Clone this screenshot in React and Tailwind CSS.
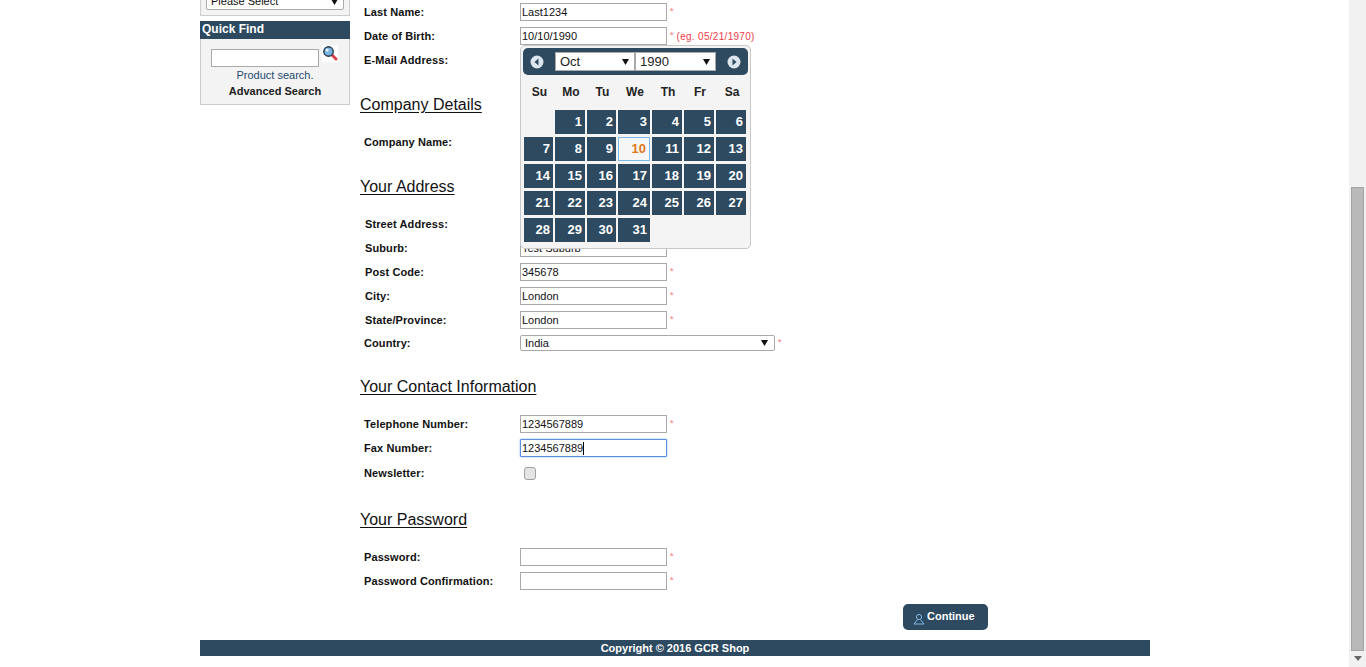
import React from "react";

const monthDays = [
  null, 1, 2, 3, 4, 5, 6,
  7, 8, 9, 10, 11, 12, 13,
  14, 15, 16, 17, 18, 19, 20,
  21, 22, 23, 24, 25, 26, 27,
  28, 29, 30, 31,
];

const weekDays = ["Su", "Mo", "Tu", "We", "Th", "Fr", "Sa"];

// Small black triangle used by the select boxes
const Caret = ({ className = "" }) => (
  <svg width="7" height="6" viewBox="0 0 7 6" className={className}>
    <path d="M0 0H7L3.5 6Z" fill="#111" />
  </svg>
);

const Required = ({ hint }) => (
  <span className="flex items-center ml-[3px] -mt-[2px] leading-none">
    <span className="text-[9px] text-[#ff7070]">*</span>
    {hint && <span className="ml-[3px] mt-[4px] text-[10px] text-[#f03a4a] tracking-[0.3px]">{hint}</span>}
  </span>
);

const Field = ({ label, value = "", hint, required = true, inset = false }) => (
  <div className="flex items-center h-6">
    <label className={`font-bold tracking-[0.1px] w-[170px] ${inset ? "pl-[15px]" : "pl-[14px]"}`}>{label}</label>
    <input
      readOnly
      defaultValue={value}
      className="w-[147px] h-[18px] px-[1px] border border-[#a9a9a9] bg-white text-[11px] text-[#111] outline-none"
    />
    {required && <Required hint={hint} />}
  </div>
);

const Heading = ({ children, className = "" }) => (
  <h2 className={`h-5 mb-[15px] pl-[10px] text-base leading-5 font-normal underline underline-offset-[2px] text-[#111] ${className}`}>
    {children}
  </h2>
);

const RoundArrow = ({ flip = false }) => (
  <svg width="14" height="14" viewBox="0 0 14 14" className={flip ? "rotate-180" : ""}>
    <circle cx="7" cy="7" r="6.5" fill="#dde5ee" />
    <path d="M4.5 7L8.5 3.5V10.5Z" fill="#2d4a60" />
  </svg>
);

const Calendar = () => (
  <div className="absolute left-[170px] top-[45px] w-[231px] h-[204px] rounded-[5px] border border-[#c8c8c8] bg-[#f4f4f4] text-[#222]">
    <div className="flex items-center ml-[2px] mt-[2px] w-[225px] h-[27px] rounded-[5px] bg-[#2d4a60]">
      <div className="ml-[7px] w-[25px]">
        <RoundArrow />
      </div>
      <div className="flex items-center justify-between w-[80px] h-[19px] pl-[4px] pr-[5px] border border-[#aaa] bg-white text-[13px] leading-none">
        Oct
        <Caret />
      </div>
      <div className="flex items-center justify-between w-[81px] h-[19px] pl-[4px] pr-[5px] border border-[#aaa] bg-white text-[13px] leading-none">
        1990
        <Caret />
      </div>
      <div className="ml-[11px]">
        <RoundArrow flip />
      </div>
    </div>
    <div className="grid grid-cols-[29px_30px_29px_32px_30px_30px_30px] gap-x-[2px] ml-[4px] mt-[4px] h-[25px] items-center text-xs font-bold text-center">
      {weekDays.map((day) => (
        <span key={day}>{day}</span>
      ))}
    </div>
    <div className="grid grid-cols-[29px_30px_29px_32px_30px_30px_30px] gap-x-[2px] gap-y-[3px] auto-rows-[24px] ml-[3px] mt-[6px] text-[13px] font-bold text-right leading-[24px]">
      {monthDays.map((day, i) =>
        day === null ? (
          <span key={i} />
        ) : day === 10 ? (
          <span key={i} className="pr-[3px] border border-[#7ab8e8] bg-[#f6f6f6] text-[#e0781e] leading-[22px]">
            {day}
          </span>
        ) : (
          <span key={i} className="pr-[3px] bg-[#2d4a60] text-white">
            {day}
          </span>
        )
      )}
    </div>
  </div>
);

const Sidebar = () => (
  <aside className="w-[150px] shrink-0">
    <div className="flex items-end justify-center h-[16px] pb-[5px] overflow-hidden border-b border-x border-[#ccc] bg-[#f3f3f3]">
      <div className="flex items-center justify-between shrink-0 w-[138px] h-[17px] pl-[4px] pr-[5px] border border-[#aaa] rounded-[2px] bg-white">
        Please Select
        <Caret />
      </div>
    </div>
    <div className="mt-[5px] h-[18px] pl-[2px] bg-[#2d4a60] text-xs leading-[17px] font-bold text-white">Quick Find</div>
    <div className="h-[66px] border border-t-0 border-[#ccc] bg-[#f3f3f3] text-center">
      <div className="flex pl-[10px] pt-[6px]">
        <input readOnly className="w-[108px] h-[18px] mt-[4px] border border-[#a9a9a9] bg-white outline-none" />
        <svg width="16" height="17" viewBox="0 0 16 17" className="ml-[3px] bg-white">
          <path d="M10 10L14 14" stroke="#d8404a" strokeWidth="3" strokeLinecap="round" />
          <circle cx="6.5" cy="6.5" r="4.7" fill="#79b4de" stroke="#26384a" strokeWidth="1.4" />
          <circle cx="5.2" cy="5" r="1.5" fill="#e6f3fc" />
        </svg>
      </div>
      <div className="leading-4 text-[#1f4a70]">Product search.</div>
      <div className="leading-4 font-bold text-[#222]">Advanced Search</div>
    </div>
  </aside>
);

const App = () => {
  return (
    <div className="flex h-[667px] overflow-hidden bg-white font-['Liberation_Sans',Arial,sans-serif] text-[11px] text-[#111]">
      <div className="flex-1 min-w-0">
        <div className="w-[950px] ml-[200px]">
          <div className="flex">
            <Sidebar />
            <main className="relative flex-1">
              <Field label="Last Name:" value="Last1234" />
              <Field label="Date of Birth:" value="10/10/1990" hint="(eg. 05/21/1970)" />
              <Field label="E-Mail Address:" />

              <Heading className="mt-[23px]">Company Details</Heading>
              <Field label="Company Name:" required={false} />

              <Heading className="mt-[23px]">Your Address</Heading>
              <Field label="Street Address:" inset />
              <Field label="Suburb:" value="Test Suburb" required={false} inset />
              <Field label="Post Code:" value="345678" inset />
              <Field label="City:" value="London" inset />
              <Field label="State/Province:" value="London" inset />
              <div className="flex items-center h-[22px]">
                <label className="w-[170px] pl-[14px] font-bold tracking-[0.1px]">Country:</label>
                <div className="flex items-center justify-between w-[255px] h-[16px] pl-[4px] pr-[6px] border border-[#a9a9a9] rounded-[2px] bg-white">
                  India
                  <Caret />
                </div>
                <Required />
              </div>

              <Heading className="mt-[23px]">Your Contact Information</Heading>
              <Field label="Telephone Number:" value="1234567889" />
              <div className="flex items-center h-6">
                <label className="w-[170px] pl-[14px] font-bold tracking-[0.1px]">Fax Number:</label>
                <div className="flex items-center w-[147px] h-[18px] px-[1px] rounded-[1px] border border-[#5b8fe0] shadow-[0_0_2px_#7aa7ee] bg-white">
                  1234567889
                  <span className="w-px h-[13px] bg-black" />
                </div>
              </div>
              <div className="flex items-center h-6 mt-px">
                <label className="w-[174px] pl-[14px] font-bold tracking-[0.1px]">Newsletter:</label>
                <input
                  type="checkbox"
                  readOnly
                  className="appearance-none w-[12px] h-[13px] rounded-[3px] border border-[#a0a0a0] bg-[#e4e4e4]"
                />
              </div>

              <Heading className="mt-[25px]">Your Password</Heading>
              <Field label="Password:" />
              <Field label="Password Confirmation:" />

              <div className="flex justify-end mt-[11px] pr-[162px]">
                <button className="flex items-center w-[85px] h-[26px] pl-[10px] rounded-[5px] bg-[#2d4a60] font-bold text-white">
                  <svg width="12" height="12" viewBox="0 0 12 12" fill="none" stroke="#7fb8e6" strokeWidth="1" className="mt-[3px]">
                    <circle cx="6" cy="4" r="2.6" />
                    <path d="M4.5 6.5L1 11H11L7.5 6.5" />
                  </svg>
                  <span className="ml-[2px] -mt-[2px]">Continue</span>
                </button>
              </div>

              <Calendar />
            </main>
          </div>
          <footer className="mt-[10px] h-4 bg-[#2d4a60] text-center leading-4 font-bold text-white">
            Copyright © 2016 GCR Shop
          </footer>
        </div>
      </div>

      {/* Browser scrollbar */}
      <div className="flex flex-col items-center w-[17px] shrink-0 bg-[#f1f1f1]">
        <div className="w-[13px] h-[464px] mt-[187px] border border-[#a4a4a4] bg-[#b9b9b9]" />
        <svg width="8" height="5" viewBox="0 0 8 5" className="mt-[5px]">
          <path d="M0 0H8L4 5Z" fill="#666" />
        </svg>
      </div>
    </div>
  );
};

export default App;
